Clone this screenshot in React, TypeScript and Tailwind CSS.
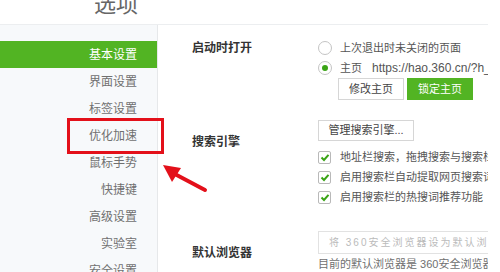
const menu = ["基本设置", "界面设置", "标签设置", "优化加速", "鼠标手势", "快捷键", "高级设置", "实验室", "安全设置"];

function Check() {
  return (
    <span className="flex h-[13px] w-[13px] shrink-0 items-center justify-center rounded-[2px] border border-[#b9b9b9] bg-white">
      <svg width="10" height="9" viewBox="0 0 10 9">
        <path d="M1.5 4.5 L4 7 L8.5 1.8" fill="none" stroke="#3aa415" strokeWidth="2" />
      </svg>
    </span>
  );
}

function Radio({ on }: { on?: boolean }) {
  return (
    <span className="flex h-[14px] w-[14px] shrink-0 items-center justify-center rounded-full border border-[#c4c4c4] bg-white">
      {on ? <span className="h-[6px] w-[6px] rounded-full bg-[#3aa415]" /> : null}
    </span>
  );
}

export default function App() {
  return (
    <div
      className="relative h-[272px] w-[500px] overflow-hidden bg-white text-[#555]"
      style={{ fontFamily: '"Liberation Sans", "Noto Sans CJK SC", sans-serif' }}
    >
      <div className="flex h-[24px] items-start pl-[94px]">
        <div className="mt-[-6px] text-[22px] leading-none text-[#666]">选项</div>
      </div>
      <div className="flex w-[488px] overflow-hidden border-t border-[#eceef0]">
        <div className="h-[260px] w-[158px] shrink-0 border-r border-[#e6e8ea] bg-[#f7f9fb] pt-[16px]">
          {menu.map((m, i) => (
            <div
              key={m}
              className={
                i === 0
                  ? "flex h-[27px] items-center justify-end bg-[#52b423] pr-[20px] text-[12px] text-white"
                  : "flex h-[27px] items-center justify-end pr-[20px] text-[12px] text-[#707070]"
              }
            >
              {m}
            </div>
          ))}
        </div>
        <div className="min-w-0 flex-1 pl-[34px] text-[11px]">
          <div className="mt-[13px] flex">
            <div className="w-[126px] shrink-0 text-[12px] font-bold leading-[20px] text-[#333]">启动时打开</div>
            <div className="min-w-0 flex-1 whitespace-nowrap">
              <div className="flex h-[20px] items-center gap-[8px]">
                <Radio />
                <span>上次退出时未关闭的页面</span>
              </div>
              <div className="flex h-[20px] items-center gap-[8px]">
                <Radio on />
                <span>主页</span>
                <span className="ml-[2px] text-[12px]">https://hao.360.cn/?h_</span>
              </div>
              <div className="ml-[20px] flex gap-[3px]">
                <div className="flex h-[22px] w-[66px] items-center justify-center border border-[#d6d6d6] bg-white text-[#444]">修改主页</div>
                <div className="flex h-[22px] w-[66px] items-center justify-center bg-[#52b423] text-white">锁定主页</div>
              </div>
            </div>
          </div>
          <div className="mt-[20px] flex">
            <div className="w-[126px] shrink-0 pt-[12px] text-[12px] font-bold leading-[20px] text-[#333]">搜索引擎</div>
            <div className="min-w-0 flex-1 whitespace-nowrap">
              <div className="flex h-[21px] w-[96px] items-center justify-center border border-[#d6d6d6] bg-white text-[#444]">管理搜索引擎...</div>
              <div className="mt-[6px]">
                {["地址栏搜索，拖拽搜索与搜索栏搜索", "启用搜索栏自动提取网页搜索词", "启用搜索栏的热搜词推荐功能"].map((t) => (
                  <div key={t} className="flex h-[20px] items-center gap-[9px]">
                    <Check />
                    <span>{t}</span>
                  </div>
                ))}
              </div>
            </div>
          </div>
          <div className="mt-[24px] flex">
            <div className="w-[126px] shrink-0 pt-[12px] text-[12px] font-bold leading-[20px] text-[#333]">默认浏览器</div>
            <div className="min-w-0 flex-1 whitespace-nowrap">
              <div className="flex h-[23px] w-[200px] items-center border border-[#e2e2e2] bg-white pl-[10px] text-[10px] tracking-[2px] text-[#bbb]">
                将 360安全浏览器设为默认浏览器
              </div>
              <div className="leading-[20px] text-[#707070]">目前的默认浏览器是 360安全浏览器</div>
            </div>
          </div>
        </div>
      </div>
      <div className="absolute left-[67px] top-[118px] h-[36px] w-[97px] border-[3px] border-[#e3101a]" />
      <svg className="absolute left-[155px] top-[158px]" width="60" height="40" viewBox="0 0 60 40">
        <line x1="50" y1="32" x2="16" y2="14" stroke="#e3101a" strokeWidth="4" strokeLinecap="round" />
        <polygon points="8,7 26,10 17,24" fill="#e3101a" />
      </svg>
    </div>
  );
}
